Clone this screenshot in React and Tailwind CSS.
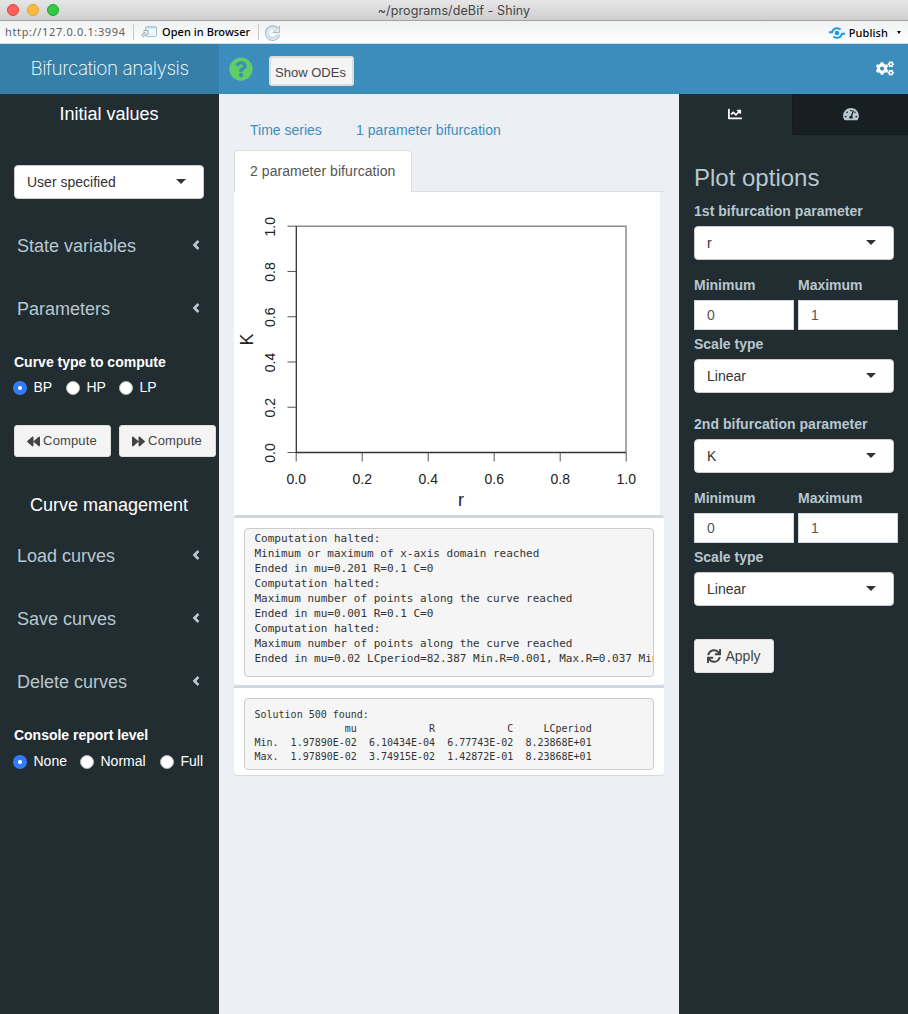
import React from "react";
import {
  FaQuestionCircle,
  FaCogs,
  FaChartLine,
  FaTachometerAlt,
  FaBackward,
  FaForward,
  FaSync,
  FaAngleLeft,
} from "react-icons/fa";

const REPORT = `Computation halted:
Minimum or maximum of x-axis domain reached
Ended in mu=0.201 R=0.1 C=0
Computation halted:
Maximum number of points along the curve reached
Ended in mu=0.001 R=0.1 C=0
Computation halted:
Maximum number of points along the curve reached
Ended in mu=0.02 LCperiod=82.387 Min.R=0.001, Max.R=0.037 Min`;

const SOLUTION = `Solution 500 found:
               mu            R            C     LCperiod
Min.  1.97890E-02  6.10434E-04  6.77743E-02  8.23868E+01
Max.  1.97890E-02  3.74915E-02  1.42872E-01  8.23868E+01`;

function TitleBar() {
  return (
    <div className="relative flex h-[21px] shrink-0 items-center justify-center border-b border-[#a3a3a3] bg-linear-to-b from-[#e6e6e6] to-[#cfcfcf]">
      <div className="absolute left-[7px] top-1 flex gap-2">
        <span className="size-3 rounded-full border border-[#e0443e] bg-[#fc605b]" />
        <span className="size-3 rounded-full border border-[#dea123] bg-[#fdbc40]" />
        <span className="size-3 rounded-full border border-[#1aab29] bg-[#34c84a]" />
      </div>
      <span className="pt-[2px] font-['Inter','Roboto',sans-serif] text-[12.5px] leading-5 tracking-[0.1px] text-[#444]">
        ~/programs/deBif - Shiny
      </span>
    </div>
  );
}

function Toolbar() {
  return (
    <div className="flex h-[23px] shrink-0 items-center border-b border-[#d8dde0] bg-linear-to-b from-[#eff1f2] to-white font-['Noto_Sans','DejaVu_Sans',sans-serif] text-[11px] leading-4 text-black">
      <span className="ml-[5px] w-32 whitespace-nowrap tracking-[0.63px] text-[#606060]">http://127.0.0.1:3994</span>
      <span className="h-4 w-px bg-[#c4c8ca]" />
      <svg className="ml-[7px]" width="17" height="14" viewBox="0 0 17 14" fill="none">
        <rect x="4.5" y="1.5" width="11" height="10" rx="1.5" fill="#f2f8fc" stroke="#a9c0d0" />
        <path d="M5 2.5h10" stroke="#b7d6ea" strokeWidth="2" />
        <path d="M1 11.5 5.5 7M2.5 6.5h3.5v3.5" stroke="#8ba3b3" strokeWidth="3" />
        <path d="M1 11.5 5.5 7M2.5 6.5h3.5v3.5" stroke="#e8f1f7" strokeWidth="1.2" />
      </svg>
      <span className="ml-[4px] w-[96px] whitespace-nowrap font-medium tracking-[0.05px]">Open in Browser</span>
      <span className="h-4 w-px bg-[#c4c8ca]" />
      <svg className="ml-[6px] mt-px" width="16" height="16" viewBox="0 0 16 16" fill="none">
        <path d="M12.5 4.5A6 6 0 1 0 13.5 9.5" stroke="#a9bccb" strokeWidth="3.600" />
        <path d="M14.5 1v6.5H8z" fill="#dfeaf4" stroke="#a9bccb" />
        <path d="M12 4.5A5.7 5.7 0 1 0 13.3 9.5" stroke="#e3edf6" strokeWidth="1.800" />
      </svg>
      <svg className="ml-auto mt-px" width="16" height="12" viewBox="0 0 16 12" fill="none" stroke="#1b98e0">
        <circle cx="8" cy="6" r="2.3" fill="#1b98e0" stroke="none" />
        <path d="M0 5.2h3C4 2.5 6 1.2 8 1.2c1.6 0 2.7.5 3.6 1.5M16 6.8h-3c-1 2.7-3 4-5 4-1.6 0-2.7-.5-3.6-1.5" strokeWidth="2" />
      </svg>
      <span className="ml-1 mt-[2px] whitespace-nowrap font-medium tracking-[0.1px]">Publish</span>
      <span className="ml-[9px] mr-[7px] mt-px border-x-[2.5px] border-t-[3px] border-x-transparent border-t-black" />
    </div>
  );
}

function Header() {
  return (
    <header className="flex h-[50px] shrink-0 bg-[#3c8dbc]">
      <div className="flex w-[219px] items-center justify-center bg-[#367fa9]">
        <span className="whitespace-nowrap pt-px font-['Inter',sans-serif] text-[19px] font-extralight tracking-[-0.47px] text-white">
          Bifurcation analysis
        </span>
      </div>
      <FaQuestionCircle className="ml-[10px] mt-[13px] size-6 text-[#5fcf65]" />
      <button className="ml-4 mt-3 h-[30px] w-[85px] whitespace-nowrap rounded-[3px] border-2 border-[#ddd] bg-[#f4f4f4] pr-[2px] text-[13px] leading-[29px] text-[#444]">
        Show ODEs
      </button>
      <FaCogs className="ml-auto mr-[14px] mt-[17px] h-[15px] w-[18px] text-white" />
    </header>
  );
}

function Select({ value, className }) {
  return (
    <div className={"flex h-[34px] items-center justify-between rounded border border-[#ccc] bg-white pl-3 pr-[17px] text-[14px] leading-5 text-[#333] " + className}>
      <span>{value}</span>
      <span className="-mt-px border-x-[5px] border-t-[5px] border-x-transparent border-t-[#333]" />
    </div>
  );
}

function MenuRow({ label }) {
  return (
    <div className="flex h-[63px] items-center justify-between pl-[17px] pr-[16px] text-[#b8c7ce]">
      <span className="text-[18px] leading-5">{label}</span>
      <FaAngleLeft className="mb-[2px] size-[14px]" stroke="currentColor" strokeWidth="28" />
    </div>
  );
}

function Radio({ label, checked, className }) {
  return (
    <label className={"flex h-5 items-center gap-[7px] " + className}>
      {checked ? (
        <span className="flex size-[14px] items-center justify-center rounded-full bg-[#2f7cf6]">
          <span className="size-1 rounded-full bg-white" />
        </span>
      ) : (
        <span className="size-[14px] rounded-full border border-[#b5b5b5] bg-white" />
      )}
      <span className="-ml-[0.5px] -mt-[2px] text-[14px] leading-5">{label}</span>
    </label>
  );
}

function Sidebar() {
  return (
    <aside className="flex w-[219px] shrink-0 flex-col bg-[#222d32] text-white">
      <h4 className="flex h-10 items-center justify-center pr-px text-[18px]">Initial values</h4>
      <Select value="User specified" className="ml-[14px] mt-[31px] w-[190px]" />
      <div className="mt-[15px]">
        <MenuRow label="State variables" />
        <MenuRow label="Parameters" />
      </div>
      <div className="ml-[14px] mt-3 text-[14px] font-bold leading-5">Curve type to compute</div>
      <div className="ml-[13px] mt-[6px] flex">
        <Radio label="BP" checked className="w-[53px]" />
        <Radio label="HP" className="w-[53px]" />
        <Radio label="LP" className="" />
      </div>
      <div className="ml-[14px] mt-[27px] flex gap-2">
        <button className="flex h-8 w-[97px] shrink-0 items-center justify-center gap-[3px] rounded-[3px] border border-[#ddd] bg-[#f4f4f4] pr-px text-[13px] tracking-[0.15px] text-[#444]">
          <FaBackward className="size-[13px]" />
          <span>Compute</span>
        </button>
        <button className="flex h-8 w-[97px] shrink-0 items-center justify-center gap-[3px] rounded-[3px] border border-[#ddd] bg-[#f4f4f4] pr-px text-[13px] tracking-[0.15px] text-[#444]">
          <FaForward className="size-[13px]" />
          <span>Compute</span>
        </button>
      </div>
      <h4 className="mt-7 flex h-10 items-center justify-center pr-px text-[18px]">Curve management</h4>
      <div className="-mt-px">
        <MenuRow label="Load curves" />
        <MenuRow label="Save curves" />
        <MenuRow label="Delete curves" />
      </div>
      <div className="ml-[14px] mt-3 text-[14px] font-bold leading-5 tracking-[-0.02px]">Console report level</div>
      <div className="ml-[13px] mt-[7px] flex">
        <Radio label="None" checked className="w-[67px]" />
        <Radio label="Normal" className="w-20" />
        <Radio label="Full" className="" />
      </div>
    </aside>
  );
}

const TICKS = ["0.0", "0.2", "0.4", "0.6", "0.8", "1.0"];

function Plot() {
  return (
    <svg width="426" height="323" viewBox="0 0 426 323" className="block bg-white" fontSize="14" fill="#222">
      <path d="M62 34.2H392V260.5" fill="none" stroke="#8c8c8c" strokeWidth="1.5" />
      <path d="M62.3 34V260.5H392" fill="none" stroke="#333" strokeWidth="1.3" />
      {TICKS.map((t, i) => (
        <g key={t}>
          <path d={`M${62.2 + i * 66} 260.5v9M62 ${260.5 - i * 45.26}h-8.5`} stroke="#555" strokeWidth="1" />
          <text x={62.2 + i * 66} y="292" textAnchor="middle">{t}</text>
          <text transform={`translate(41 ${261 - i * 45.26}) rotate(-90)`} textAnchor="middle">{t}</text>
        </g>
      ))}
      <text x="227" y="314" textAnchor="middle" fontSize="18">r</text>
      <text transform="translate(19.2 147.5) rotate(-90)" textAnchor="middle" fontSize="18">K</text>
    </svg>
  );
}

function Content() {
  return (
    <main className="flex w-[460px] shrink-0 flex-col bg-[#ecf0f5] pl-[15px] pr-[15px] pt-[15px]">
      <nav className="flex flex-wrap border-b border-[#ddd] text-[14px] leading-5 text-[#3c8dbc]">
        <div className="flex h-[41px] w-[106px] items-center pl-4">Time series</div>
        <div className="flex h-[41px] w-[300px] items-center pl-4 tracking-[0.04px]">1 parameter bifurcation</div>
        <div className="-mb-px flex h-[42px] w-[178px] items-center rounded-t border border-b-0 border-[#ddd] bg-white pb-px pl-[15px] tracking-[0.06px] text-[#555]">
          2 parameter bifurcation
        </div>
      </nav>
      <Plot />
      <section className="h-[170px] rounded-[3px] border-t-[3px] border-[#d2d6de] bg-white px-[10px] pt-[10px] shadow-[0_1px_1px_rgba(0,0,0,0.1)]">
        <pre className="h-[149px] overflow-hidden rounded border border-[#ccc] bg-[#f5f5f5] pl-[9.5px] pt-[2px] font-['DejaVu_Sans_Mono',monospace] text-[11px] leading-[15px] text-[#333]">
          {REPORT}
        </pre>
      </section>
      <section className="h-[90px] rounded-[3px] border-t-[3px] border-[#d2d6de] bg-white px-[10px] pt-[10px] shadow-[0_1px_1px_rgba(0,0,0,0.1)]">
        <pre className="h-[72px] overflow-hidden rounded border border-[#ccc] bg-[#f5f5f5] pl-[9.5px] pt-[9px] font-['DejaVu_Sans_Mono',monospace] text-[10px] leading-[14px] text-[#333]">
          {SOLUTION}
        </pre>
      </section>
    </main>
  );
}

function RangeInput({ label, value }) {
  return (
    <div className="w-[100px]">
      <div className="font-bold leading-5">{label}</div>
      <div className="mt-[5px] h-[30px] border border-[#d2d6de] bg-white pl-3 text-[14px] leading-[29px] text-[#555]">
        {value}
      </div>
    </div>
  );
}

function ParameterGroup({ label, value }) {
  return (
    <div className="h-[213px] text-[14px]">
      <div className="font-bold leading-5 tracking-[0.03px]">{label}</div>
      <Select value={value} className="mt-[5px] w-[200px]" />
      <div className="mt-[15px] flex w-[204px] gap-1">
        <RangeInput label="Minimum" value="0" />
        <RangeInput label="Maximum" value="1" />
      </div>
      <div className="mt-1 font-bold leading-5">Scale type</div>
      <Select value="Linear" className="mt-[5px] w-[200px]" />
    </div>
  );
}

function ControlPanel() {
  return (
    <aside className="flex w-[229px] shrink-0 flex-col bg-[#222d32] text-[#b8c7ce]">
      <div className="flex h-[41px] shrink-0">
        <div className="flex w-[113px] items-center justify-center pb-px pr-px text-white">
          <FaChartLine className="size-[14px]" />
        </div>
        <div className="flex flex-1 items-center justify-center border-b border-l border-[#141a1d] bg-[#181f23] pb-px">
          <FaTachometerAlt className="h-[14px] w-4" />
        </div>
      </div>
      <div className="pl-[15px]">
        <h3 className="mt-[28px] text-[24px] leading-[30px]">Plot options</h3>
        <div className="mt-2">
          <ParameterGroup label="1st bifurcation parameter" value="r" />
          <ParameterGroup label="2nd bifurcation parameter" value="K" />
        </div>
        <button className="mt-[12px] flex h-[34px] w-20 items-center justify-center gap-1 rounded-[3px] border border-[#ddd] bg-[#f4f4f4] text-[14px] text-[#444]">
          <FaSync className="size-[14px]" />
          <span>Apply</span>
        </button>
      </div>
    </aside>
  );
}

export default function App() {
  return (
    <div className="flex h-[1014px] w-[908px] flex-col overflow-hidden font-['Liberation_Sans',Arial,sans-serif]">
      <TitleBar />
      <Toolbar />
      <Header />
      <div className="flex min-h-0 flex-1">
        <Sidebar />
        <Content />
        <ControlPanel />
      </div>
    </div>
  );
}
